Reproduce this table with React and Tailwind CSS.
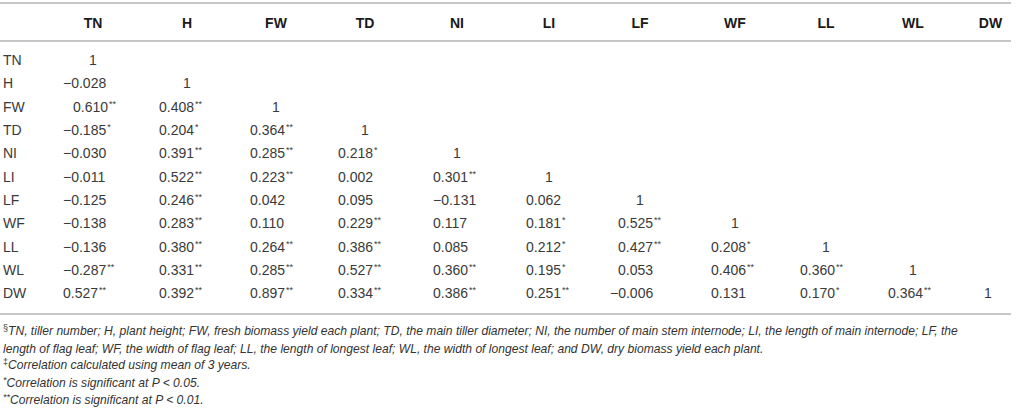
import React from "react";

const HEAD = ["TN", "H", "FW", "TD", "NI", "LI", "LF", "WF", "LL", "WL", "DW"];

const ROWS = [
  ["TN", ["1"]],
  ["H", ["−0.028", "1"]],
  ["FW", ["0.610**", "0.408**", "1"]],
  ["TD", ["−0.185*", "0.204*", "0.364**", "1"]],
  ["NI", ["−0.030", "0.391**", "0.285**", "0.218*", "1"]],
  ["LI", ["−0.011", "0.522**", "0.223**", "0.002", "0.301**", "1"]],
  ["LF", ["−0.125", "0.246**", "0.042", "0.095", "−0.131", "0.062", "1"]],
  ["WF", ["−0.138", "0.283**", "0.110", "0.229**", "0.117", "0.181*", "0.525**", "1"]],
  ["LL", ["−0.136", "0.380**", "0.264**", "0.386**", "0.085", "0.212*", "0.427**", "0.208*", "1"]],
  ["WL", ["−0.287**", "0.331**", "0.285**", "0.527**", "0.360**", "0.195*", "0.053", "0.406**", "0.360**", "1"]],
  ["DW", ["0.527**", "0.392**", "0.897**", "0.334**", "0.386**", "0.251**", "−0.006", "0.131", "0.170*", "0.364**", "1"]],
];

const PL = [
  "pl-[17px]",
  "pl-[19px]",
  "pl-[16px]",
  "pl-[20px]",
  "pl-[21px]",
  "pl-[24px]",
  "pl-[22px]",
  "pl-[27px]",
  "pl-[14px]",
  "pl-[22px]",
  "pl-[0px]",
];

function cellClass(r, c) {
  if (r === "FW" && c === 0) return "pl-[27px]";
  if (r === "DW" && c === 6) return "pl-[14px]";
  return PL[c];
}

function Val({ v }) {
  const m = v.match(/^([^*]+)(\**)$/);
  const num = m ? m[1] : v;
  const stars = m ? m[2] : "";
  return (
    <span className="whitespace-nowrap">
      {num}
      {stars && (
        <span className="relative top-[-5px] ml-[1px] text-[9px] leading-none">{stars}</span>
      )}
    </span>
  );
}

const GRID =
  "grid grid-cols-[46px_94px_94px_84px_94px_90px_94px_88px_102px_80px_94px_51px]";

export default function App() {
  return (
    <div
      className="w-[1016px] h-[411px] bg-white overflow-hidden text-[#3a3a3a]"
      style={{ fontFamily: '"Liberation Sans", Arial, sans-serif' }}
    >
      <div className="w-[1011px] pt-[2px]">
        <div className="h-[2px] bg-[#c6c6c6]" />
        <div className={`${GRID} h-[36px] pt-[2px] items-center text-[14px] font-bold text-[#1a1a1a]`}>
          <div />
          {HEAD.map((h, i) => (
            <div key={h} className={i === 10 ? "text-center pl-[10px]" : "text-center"}>
              {h}
            </div>
          ))}
        </div>
        <div className="h-[2px] bg-[#c6c6c6]" />
        <div className="pt-[7px] pb-[8px]">
          {ROWS.map(([label, vals]) => (
            <div key={label} className={`${GRID} h-[23.3px] items-center text-[14px]`}>
              <div className="pl-[3px]">{label}</div>
              {HEAD.map((_, c) => {
                const v = vals[c];
                if (v === undefined) return <div key={c} />;
                if (v === "1")
                  return (
                    <div key={c} className={c === 10 ? "text-center pl-[5px]" : "text-center"}>
                      1
                    </div>
                  );
                return (
                  <div key={c} className={cellClass(label, c)}>
                    <Val v={v} />
                  </div>
                );
              })}
            </div>
          ))}
        </div>
        <div className="h-[2px] bg-[#c6c6c6]" />
        <div className="pt-[8px] pl-[3px] text-[12.1px] italic leading-[16.5px] text-[#333]">
          <div className="whitespace-nowrap">
            <span className="relative top-[-4px] text-[9px] not-italic">§</span>
            TN, tiller number; H, plant height; FW, fresh biomass yield each plant; TD, the main tiller diameter; NI, the number of main stem internode; LI, the length of main internode; LF, the
          </div>
          <div className="whitespace-nowrap">
            length of flag leaf; WF, the width of flag leaf; LL, the length of longest leaf; WL, the width of longest leaf; and DW, dry biomass yield each plant.
          </div>
          <div className="whitespace-nowrap">
            <span className="relative top-[-4px] text-[9px] not-italic">‡</span>
            Correlation calculated using mean of 3 years.
          </div>
          <div className="whitespace-nowrap">
            <span className="relative top-[-4px] text-[9px]">*</span>
            Correlation is significant at P &lt; 0.05.
          </div>
          <div className="whitespace-nowrap">
            <span className="relative top-[-4px] text-[9px]">**</span>
            Correlation is significant at P &lt; 0.01.
          </div>
        </div>
      </div>
    </div>
  );
}
